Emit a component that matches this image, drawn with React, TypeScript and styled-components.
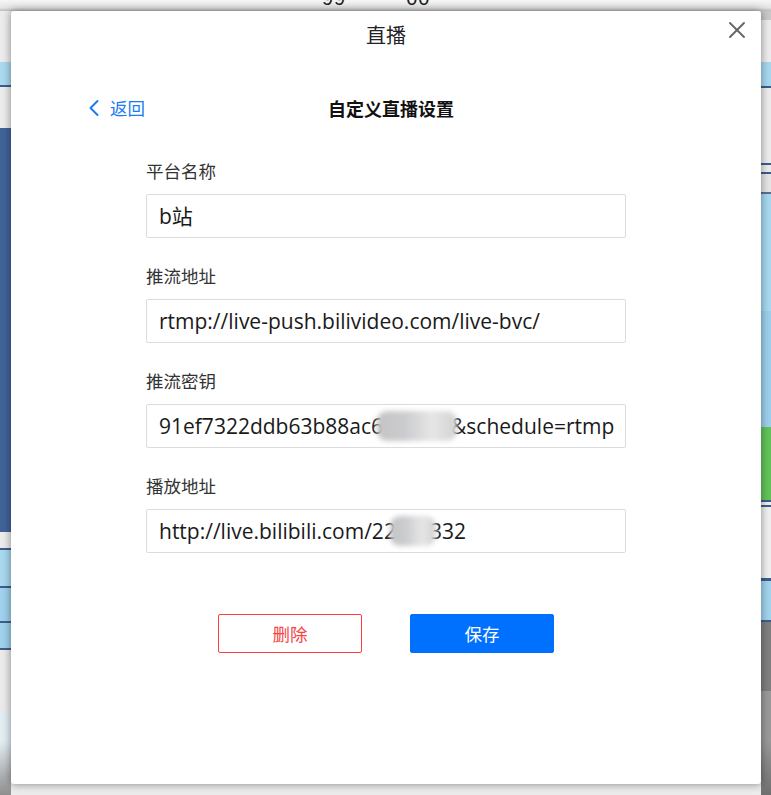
import React from "react";
import styled, { createGlobalStyle } from "styled-components";
import { X, ChevronLeft } from "lucide-react";

const Global = createGlobalStyle`
  html, body { margin: 0; padding: 0; background: #fff; }
  body { font-family: "Noto Sans CJK SC", "Noto Sans", sans-serif; }
  * { box-sizing: border-box; }
`;

const CJK = `"Noto Sans CJK SC", "Noto Sans", sans-serif`;
const LATIN = `"Open Sans", "Noto Sans CJK SC", sans-serif`;

const Stage = styled.div`
  position: relative;
  width: 771px;
  height: 795px;
  overflow: hidden;
`;

const Backdrop = styled.div`
  display: flex;
  flex-direction: column;
  height: 100%;
`;

const TopBar = styled.div`
  height: 11px;
  flex: none;
  display: flex;
  align-items: flex-end;
  gap: 60px;
  padding-left: 322px;
  overflow: hidden;
  background: linear-gradient(#f6f6f6, #e4e4e4 70%, #bcbcbc);
`;

const TopGlyphs = styled.span`
  font: 20px/20px "Liberation Sans", sans-serif;
  color: #1e1e1e;
  margin-bottom: 3px;
  letter-spacing: 1px;
`;

const BackRow = styled.div`
  flex: 1;
  display: flex;
`;

const LeftStrip = styled.div`
  width: 11px;
  background: linear-gradient(
    #ececec 0 51px,
    #aad9f0 51px 74px,
    #3e5d8c 74px 76px,
    #ececec 76px 117px,
    #40639a 117px 521px,
    #ececec 521px 537px,
    #3e5d8c 537px 539px,
    #a9d8ef 539px 575px,
    #3e5d8c 575px 577px,
    #9fd2ec 577px 610px,
    #3e5d8c 610px 612px,
    #9fd2ec 612px 637px,
    #3e5d8c 637px 639px,
    #ebebeb 639px 700px,
    #e3eef3 700px 730px,
    #8e8e8e 784px
  );
`;

const Middle = styled.div`
  flex: 1;
  background: #ececec;
`;

const RightStrip = styled.div`
  width: 10px;
  background: linear-gradient(
    #c9c9c9 0 9px,
    #ececec 9px 51px,
    #a7d8f0 51px 75px,
    #3e5d8c 75px 77px,
    #ececec 77px 152px,
    #3e5d8c 152px 154px,
    #ececec 154px 161px,
    #3e5d8c 161px 163px,
    #e5e5e5 163px 181px,
    #5d6f90 181px 183px,
    #a8d9f0 183px 300px,
    #9dd0ec 300px 416px,
    #62c45a 416px 489px,
    #3e5d8c 489px 491px,
    #eeeeee 491px 494px,
    #3e5d8c 494px 496px,
    #f0f0f0 496px 567px,
    #3e5d8c 567px 570px,
    #a3d4ee 570px 609px,
    #3e5d8c 609px 611px,
    #7f7f7f 611px 680px,
    #9a9a9a 680px 730px,
    #6f6f6f 784px
  );
`;

const Dialog = styled.section`
  position: absolute;
  top: 11px;
  left: 11px;
  width: 750px;
  height: 773px;
  background: #fff;
  border-radius: 3px;
  box-shadow: 0 0 8px rgba(0, 0, 0, 0.45);
  display: flex;
  flex-direction: column;
`;

const Header = styled.header`
  height: 48px;
  display: grid;
  grid-template-columns: 1fr auto 1fr;
  align-items: center;
`;

const Title = styled.h1`
  grid-column: 2;
  margin: 0;
  font: 400 20px/1 ${CJK};
  color: #222;
`;

const CloseButton = styled.button`
  grid-column: 3;
  justify-self: end;
  align-self: start;
  margin: 5px 10px 0 0;
  padding: 0;
  width: 28px;
  height: 28px;
  border: 0;
  background: none;
  color: #666;
  display: flex;
  cursor: pointer;
`;

const SubHeader = styled.div`
  margin-top: 29px;
  height: 40px;
  display: grid;
  grid-template-columns: 1fr auto 1fr;
  align-items: center;
  padding: 0 59px 0 69px;
`;

const BackLink = styled.a`
  justify-self: start;
  display: inline-flex;
  align-items: center;
  gap: 2px;
  font: 400 17.5px/1 ${CJK};
  color: #1a7cf2;
  text-decoration: none;
  cursor: pointer;
`;

const SubTitle = styled.h2`
  margin: 0;
  font: 700 18px/1 ${CJK};
  color: #111;
`;

const Form = styled.div`
  margin-top: 31px;
  padding: 0 135px;
  display: flex;
  flex-direction: column;
`;

const Field = styled.div`
  display: flex;
  flex-direction: column;
  gap: 11px;
  margin-bottom: 26px;
`;

const Label = styled.label`
  font: 400 17.5px/24px ${CJK};
  color: #333;
`;

const Box = styled.div`
  height: 44px;
  border: 1px solid #dcdcdc;
  border-radius: 2px;
  display: flex;
  align-items: center;
  padding: 0 12px;
  overflow: hidden;
  white-space: nowrap;
  font: 400 21px/1 ${LATIN};
  color: #1a1a1a;
`;

const Smudge = styled.span<{ $w: number }>`
  flex: none;
  display: inline-block;
  position: relative;
  width: ${(p) => p.$w}px;
  height: 30px;
  margin: 0 -6px;
  border-radius: 10px;
  background: linear-gradient(
    90deg,
    #c4c4c4 0%,
    #cbcccf 35%,
    #dcdcdc 55%,
    #e6e6e6 70%,
    #d2d2d2 100%
  );
  filter: blur(2.5px);
`;

const Actions = styled.div`
  margin-top: 35px;
  display: flex;
  justify-content: center;
  gap: 48px;
`;

const Button = styled.button<{ $primary?: boolean }>`
  width: 144px;
  height: 39px;
  border-radius: 2px;
  font: 400 17.5px/1 ${CJK};
  cursor: pointer;
  border: 1px solid ${(p) => (p.$primary ? "#0070ff" : "#ff3d3d")};
  background: ${(p) => (p.$primary ? "#0070ff" : "#fff")};
  color: ${(p) => (p.$primary ? "#fff" : "#f64545")};
`;

export default function App() {
  return (
    <>
      <Global />
      <Stage>
        <Backdrop>
          <TopBar>
            <TopGlyphs>99</TopGlyphs>
            <TopGlyphs>00</TopGlyphs>
          </TopBar>
          <BackRow>
            <LeftStrip />
            <Middle />
            <RightStrip />
          </BackRow>
        </Backdrop>
        <Dialog>
          <Header>
            <Title>直播</Title>
            <CloseButton aria-label="关闭">
              <X size={28} strokeWidth={1.6} />
            </CloseButton>
          </Header>
          <SubHeader>
            <BackLink>
              <ChevronLeft size={28} strokeWidth={1.7} />
              返回
            </BackLink>
            <SubTitle>自定义直播设置</SubTitle>
          </SubHeader>
          <Form>
            <Field>
              <Label>平台名称</Label>
              <Box>b站</Box>
            </Field>
            <Field>
              <Label>推流地址</Label>
              <Box>rtmp://live-push.bilivideo.com/live-bvc/</Box>
            </Field>
            <Field>
              <Label>推流密钥</Label>
              <Box>
                91ef7322ddb63b88ac6
                <Smudge $w={80} />
                &amp;schedule=rtmp
              </Box>
            </Field>
            <Field>
              <Label>播放地址</Label>
              <Box>
                http://live.bilibili.com/22
                <Smudge $w={46} />
                332
              </Box>
            </Field>
          </Form>
          <Actions>
            <Button>删除</Button>
            <Button $primary>保存</Button>
          </Actions>
        </Dialog>
      </Stage>
    </>
  );
}
